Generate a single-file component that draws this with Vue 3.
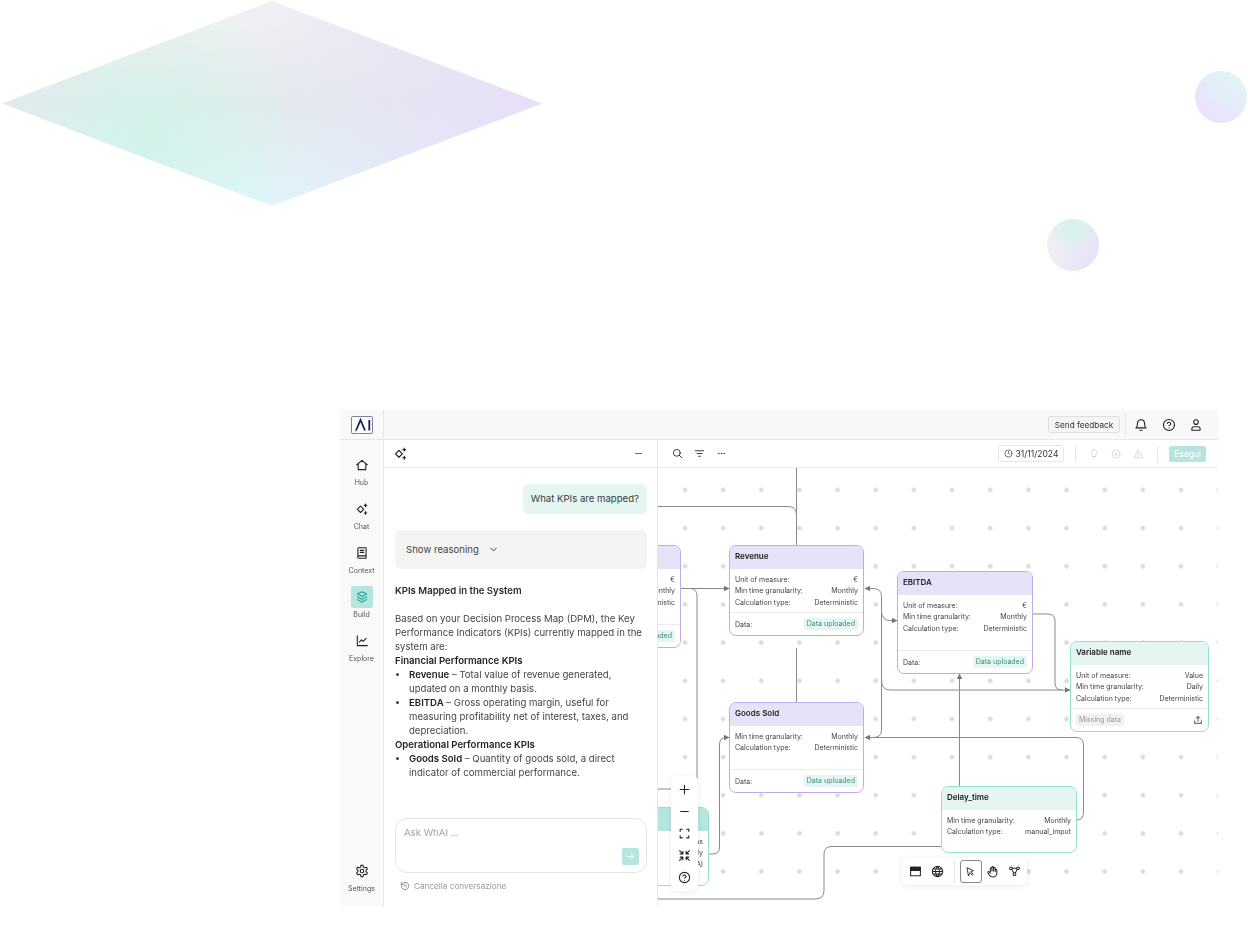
<template>
  <div class="page">
    <div class="diamond"></div>
    <div class="orb orb-a"></div>
    <div class="orb orb-b"></div>

    <div class="app">
      <aside class="rail">
        <div class="rail-head">
          <div class="logo">
            <svg viewBox="0 0 20 16">
              <path d="M4 13.500 8.500 3l4.500 10.500" />
              <path d="M17.300 3v10.500" />
              <path class="logo-dot" d="M2.800 14h1.600" />
            </svg>
          </div>
        </div>
        <nav class="rail-nav">
          <a v-for="item in navItems" :key="item.label" class="nav-item" :class="{ active: item.active }">
            <span class="nav-icon">
              <svg class="ico" viewBox="0 0 24 24"><path :d="icons[item.icon]" /></svg>
            </span>
            <span class="nav-label">{{ item.label }}</span>
          </a>
        </nav>
        <a class="nav-item settings">
          <span class="nav-icon">
            <svg class="ico" viewBox="0 0 24 24"><path :d="icons.settings" /></svg>
          </span>
          <span class="nav-label">Settings</span>
        </a>
      </aside>

      <div class="main">
        <header class="topbar">
          <button class="feedback">Send feedback</button>
          <span class="top-sep"></span>
          <svg class="ico top-ico" viewBox="0 0 24 24"><path :d="icons.bell" /></svg>
          <svg class="ico top-ico" viewBox="0 0 24 24"><path :d="icons.help" /></svg>
          <svg class="ico top-ico" viewBox="0 0 24 24"><path :d="icons.user" /></svg>
        </header>

        <div class="workspace">
          <section class="chat">
            <div class="chat-head">
              <svg class="ico" viewBox="0 0 24 24"><path :d="icons.sparkle" /></svg>
              <svg class="ico minus" viewBox="0 0 24 24"><path :d="icons.minus" /></svg>
            </div>
            <div class="chat-body">
              <div class="bubble">What KPIs are mapped?</div>
              <div class="reasoning">
                <span>Show reasoning</span>
                <svg class="ico chev" viewBox="0 0 24 24"><path d="m6 9 6 6 6-6" /></svg>
              </div>
              <div class="answer">
                <p class="answer-title">KPIs Mapped in the System</p>
                <p>Based on your Decision Process Map (DPM), the Key Performance Indicators (KPIs) currently mapped in the system are:</p>
                <p class="group">Financial Performance KPIs</p>
                <ul>
                  <li><b>Revenue</b> – Total value of revenue generated, updated on a monthly basis.</li>
                  <li><b>EBITDA</b> – Gross operating margin, useful for measuring profitability net of interest, taxes, and depreciation.</li>
                </ul>
                <p class="group">Operational Performance KPIs</p>
                <ul>
                  <li><b>Goods Sold</b> – Quantity of goods sold, a direct indicator of commercial performance.</li>
                </ul>
              </div>
              <div class="composer">
                <span class="placeholder">Ask WhAI ...</span>
                <button class="send">
                  <svg class="ico" viewBox="0 0 24 24"><path d="M5 12h14M13 6l6 6-6 6" /></svg>
                </button>
              </div>
              <div class="clear">
                <svg class="ico" viewBox="0 0 24 24"><path :d="icons.history" /></svg>
                <span>Cancella conversazione</span>
              </div>
            </div>
          </section>

          <section class="board">
            <div class="board-head">
              <svg class="ico" viewBox="0 0 24 24"><path :d="icons.search" /></svg>
              <svg class="ico" viewBox="0 0 24 24"><path :d="icons.filter" /></svg>
              <svg class="ico" viewBox="0 0 24 24"><path :d="icons.more" /></svg>
              <div class="date">
                <svg class="ico" viewBox="0 0 24 24"><path :d="icons.clock" /></svg>
                <span>31/11/2024</span>
              </div>
              <span class="head-sep"></span>
              <svg class="ico faint" viewBox="0 0 24 24"><path :d="icons.bulb" /></svg>
              <svg class="ico faint" viewBox="0 0 24 24"><path :d="icons.xcircle" /></svg>
              <svg class="ico faint" viewBox="0 0 24 24"><path :d="icons.warning" /></svg>
              <span class="head-sep second"></span>
              <button class="run">Esegui</button>
            </div>

            <div class="canvas">
              <svg class="edges" viewBox="658 468 560 438">
                <defs>
                  <marker id="tip" markerUnits="userSpaceOnUse" markerWidth="6" markerHeight="6" refX="5" refY="3" orient="auto">
                    <path d="M0 0.2 5.400 3 0 5.800z" />
                  </marker>
                </defs>
                <path v-for="(d, i) in edges" :key="i" :d="d" />
                <path v-for="(d, i) in arrows" :key="'a' + i" :d="d" marker-end="url(#tip)" />
              </svg>

              <article
                v-for="node in nodes"
                :key="node.title"
                class="node"
                :class="node.tone"
                :style="{ left: node.x + 'px', top: node.y + 'px', width: node.w + 'px', height: node.h + 'px' }"
              >
                <div class="node-head">{{ node.title }}</div>
                <div class="node-rows">
                  <div v-for="row in node.rows" :key="row[0]" class="node-row">
                    <span>{{ row[0] }}</span><span>{{ row[1] }}</span>
                  </div>
                </div>
                <div v-if="node.chip" class="node-foot">
                  <template v-if="node.missing">
                    <span class="chip grey">{{ node.chip }}</span>
                    <svg class="ico upload" viewBox="0 0 24 24"><path :d="icons.upload" /></svg>
                  </template>
                  <template v-else>
                    <span>Data:</span>
                    <span class="chip">{{ node.chip }}</span>
                  </template>
                </div>
              </article>

              <div class="zoom-tools">
                <svg v-for="name in zoomTools" :key="name" class="ico" viewBox="0 0 24 24"><path :d="icons[name]" /></svg>
              </div>

              <div class="mode-tools">
                <svg class="ico" viewBox="0 0 24 24"><path class="solid-top" d="M3 4h18v6H3z" /><path d="M3 4h18v16H3z" /></svg>
                <svg class="ico" viewBox="0 0 24 24"><path :d="icons.globe" /></svg>
                <span class="mode-sep"></span>
                <span class="mode-active">
                  <svg class="ico" viewBox="0 0 24 24"><path :d="icons.pointer" /></svg>
                </span>
                <svg class="ico" viewBox="0 0 24 24"><path :d="icons.hand" /></svg>
                <svg class="ico" viewBox="0 0 24 24"><path :d="icons.graph" /></svg>
              </div>
            </div>
          </section>
        </div>
      </div>
    </div>
  </div>
</template>

<script setup>
const icons = {
  home: 'M3 11.500 12 4l9 7.500M5.500 10v10h13V10',
  sparkle: 'M9.500 7l5.500 5.500-5.500 5.500L4 12.500zM18 3.500v4.500M15.800 5.800h4.400M18 16.500v4.500M15.800 18.800h4.400',
  book: 'M5 19V4.500A1.500 1.500 0 0 1 6.500 3H19v14H6.500a2 2 0 0 0 0 4H19v-4M9 7.500h6M9 11h6',
  layers: 'M12 3l8 4-8 4-8-4zM4 12l8 4 8-4M4 16.500l8 4 8-4',
  chart: 'M4 3v17h17M7.500 14l3.500-4 3 2.500 5-5',
  settings: 'M12.220 2h-.44a2 2 0 0 0-2 2v.18a2 2 0 0 1-1 1.730l-.43.25a2 2 0 0 1-2 0l-.15-.08a2 2 0 0 0-2.730.73l-.22.38a2 2 0 0 0 .73 2.730l.15.1a2 2 0 0 1 1 1.720v.51a2 2 0 0 1-1 1.740l-.15.09a2 2 0 0 0-.73 2.730l.22.38a2 2 0 0 0 2.730.73l.15-.08a2 2 0 0 1 2 0l.43.25a2 2 0 0 1 1 1.730V20a2 2 0 0 0 2 2h.44a2 2 0 0 0 2-2v-.18a2 2 0 0 1 1-1.730l.43-.25a2 2 0 0 1 2 0l.15.08a2 2 0 0 0 2.730-.73l.22-.39a2 2 0 0 0-.73-2.730l-.15-.08a2 2 0 0 1-1-1.740v-.5a2 2 0 0 1 1-1.740l.15-.09a2 2 0 0 0 .73-2.730l-.22-.38a2 2 0 0 0-2.730-.73l-.15.08a2 2 0 0 1-2 0l-.43-.25a2 2 0 0 1-1-1.730V4a2 2 0 0 0-2-2zM15 12a3 3 0 1 1-6 0 3 3 0 0 1 6 0z',
  bell: 'M6 9a6 6 0 0 1 12 0c0 6 2.500 8 2.500 8h-17S6 15 6 9M10.300 20.500a2 2 0 0 0 3.400 0',
  help: 'M21.500 12a9.500 9.500 0 1 1-19 0 9.500 9.500 0 0 1 19 0zM9.100 9.200a3 3 0 0 1 5.800 1c0 2-2.900 2.800-2.900 2.800M12 17h.01',
  user: 'M16 7a4 4 0 1 1-8 0 4 4 0 0 1 8 0zM5 21v-2.500A3.500 3.500 0 0 1 8.500 15h7a3.500 3.500 0 0 1 3.500 3.500V21z',
  minus: 'M5 12h14',
  plus: 'M12 4v16M4 12h16',
  history: 'M3 4v5h5M3.500 9a9 9 0 1 1-.5 3M12 7v5l3.500 2',
  search: 'M18 10.500a7.500 7.500 0 1 1-15 0 7.500 7.500 0 0 1 15 0zM16 16l5 5',
  filter: 'M3 6h18M6.500 12h11M10 18h4',
  more: 'M5 12h2M11 12h2M17 12h2',
  clock: 'M21.500 12a9.500 9.500 0 1 1-19 0 9.500 9.500 0 0 1 19 0zM12 6.500V12l3.500 2',
  bulb: 'M9 18h6M10 22h4M12 2a7 7 0 0 0-4 12.700V18h8v-3.300A7 7 0 0 0 12 2z',
  xcircle: 'M21.500 12a9.500 9.500 0 1 1-19 0 9.500 9.500 0 0 1 19 0zM15 9l-6 6M9 9l6 6',
  warning: 'M12 3 2 21h20zM12 10v5M12 18h.01',
  frame: 'M4 8V4h4M16 4h4v4M20 16v4h-4M8 20H4v-4',
  collapse: 'M3 3l6 6M9 4v5H4M21 3l-6 6M15 4v5h5M3 21l6-6M9 20v-5H4M21 21l-6-6M15 20v-5h5',
  globe: 'M21.500 12a9.500 9.500 0 1 1-19 0 9.500 9.500 0 0 1 19 0zM2.500 12h19M3.500 7.500h17M3.500 16.500h17M12 2.500c-5 5-5 14 0 19M12 2.500c5 5 5 14 0 19',
  pointer: 'M5 4l13.500 6-5.500 2.500 5 5.500-2 2-5-5.500L8 21z',
  hand: 'M8 12V6.500a1.500 1.500 0 0 1 3 0V11M11 10.500v-6a1.500 1.500 0 0 1 3 0v6.500M14 11V6a1.500 1.500 0 0 1 3 0v6M17 9.500a1.500 1.500 0 0 1 3 0V15a7 7 0 0 1-7 7h-1a7 7 0 0 1-6-3.500L3.500 14a1.500 1.500 0 0 1 2.500-1.500L8 15',
  graph: 'M8 6a2.500 2.500 0 1 1-5 0 2.500 2.500 0 0 1 5 0zM21 6a2.500 2.500 0 1 1-5 0 2.500 2.500 0 0 1 5 0zM14.500 17a2.500 2.500 0 1 1-5 0 2.500 2.500 0 0 1 5 0zM8 6h8M7 8l3.500 7M17 8l-3.500 7',
  upload: 'M12 15V4M7.500 8 12 3.500 16.500 8M4 14v6h16v-6',
}

const navItems = [
  { label: 'Hub', icon: 'home' },
  { label: 'Chat', icon: 'sparkle' },
  { label: 'Context', icon: 'book' },
  { label: 'Build', icon: 'layers', active: true },
  { label: 'Explore', icon: 'chart' },
]

const zoomTools = ['plus', 'minus', 'frame', 'collapse', 'help']

// node coords are relative to the canvas, which starts at 658,468 on the page
const nodes = [
  {
    title: 'Net Sales', tone: 'violet', x: -112, y: 77, w: 135, h: 103, chip: 'Data uploaded',
    rows: [['Unit of measure:', '€'], ['Min time granularity:', 'Monthly'], ['Calculation type:', 'Deterministic']],
  },
  {
    title: 'Revenue', tone: 'violet', x: 71, y: 77, w: 135, h: 91, chip: 'Data uploaded',
    rows: [['Unit of measure:', '€'], ['Min time granularity:', 'Monthly'], ['Calculation type:', 'Deterministic']],
  },
  {
    title: 'EBITDA', tone: 'violet', x: 239, y: 103, w: 136, h: 103, chip: 'Data uploaded',
    rows: [['Unit of measure:', '€'], ['Min time granularity:', 'Monthly'], ['Calculation type:', 'Deterministic']],
  },
  {
    title: 'Variable name', tone: 'mint', x: 412, y: 173, w: 139, h: 91, chip: 'Missing data', missing: true,
    rows: [['Unit of measure:', 'Value'], ['Min time granularity:', 'Daily'], ['Calculation type:', 'Deterministic']],
  },
  {
    title: 'Goods Sold', tone: 'violet', x: 71, y: 234, w: 135, h: 91, chip: 'Data uploaded',
    rows: [['Min time granularity:', 'Monthly'], ['Calculation type:', 'Deterministic']],
  },
  {
    title: 'Delay_time', tone: 'mint', x: 283, y: 318, w: 136, h: 67,
    rows: [['Min time granularity:', 'Monthly'], ['Calculation type:', 'manual_imput']],
  },
  {
    title: 'Delay_ideas', tone: 'teal', x: -84, y: 339, w: 135, h: 79,
    rows: [['Unit of measure:', 'Ideas'], ['Min time granularity:', 'Monthly'], ['Calculation type:', 'WhAI']],
  },
]

const edges = [
  'M796.500 468V545',
  'M658 506.500H788Q796.500 506.500 796.500 515',
  'M690 588.500Q697 588.500 697 596V781Q697 789 689 789H658',
  'M796.500 648V702',
  'M881.500 612V730Q881.500 737.500 873 737.500',
  'M1033 614H1048Q1055 614 1055 621V683Q1055 690 1062 690',
  'M1077 820H1077Q1083.500 820 1083.500 812V745Q1083.500 737.500 1076 737.500H866',
  'M941 846.500H832Q824 846.500 824 854V891Q824 899 815 899H658',
]

const arrows = [
  'M681 588.500H729',
  'M881.500 612V596Q881.500 588.500 873 588.500H865',
  'M881.500 612Q882 620.500 890 620.500H897',
  'M881.500 680Q881.500 690 890 690H1070',
  'M959.500 786V674',
  'M709 854H713Q719.500 854 719.500 847V745Q719.500 737.500 726 737.500H729',
  'M880 737.500H865',
]
</script>

<style>
html,
body {
  background: #fff;
}
</style>

<style scoped>
.page {
  position: relative;
  height: 936px;
  overflow: hidden;
  background: #fff;
  font-family: Inter, 'Liberation Sans', sans-serif;
  color: #3d3d3d;
}

.diamond {
  position: absolute;
  left: 2px;
  top: 1px;
  width: 540px;
  height: 205px;
  clip-path: polygon(0 50%, 50% 0, 100% 50%, 50% 100%);
  background:
    radial-gradient(circle 150px at 27% 68%, rgba(207, 243, 233, 0.8), rgba(207, 243, 233, 0)),
    linear-gradient(90deg, rgba(232, 222, 248, 0) 42%, #e8dff8 100%),
    linear-gradient(180deg, #f2f2f4 0%, #e2ebec 50%, #dff8fb 100%);
}

.orb {
  position: absolute;
  width: 52px;
  height: 52px;
  border-radius: 50%;
}

.orb-a {
  left: 1195px;
  top: 71px;
  background: linear-gradient(35deg, #e9e3fb 18%, #e0f4f7 82%);
}

.orb-b {
  left: 1047px;
  top: 219px;
  background:
    radial-gradient(circle 30px at 50% 12%, #d2f3eb, rgba(210, 243, 235, 0)),
    linear-gradient(110deg, #f2f2f3 5%, #e7e2f8 90%);
}

.app {
  position: absolute;
  left: 340px;
  top: 410px;
  display: flex;
  width: 878px;
  height: 496px;
  overflow: hidden;
  border-radius: 3px 3px 0 0;
  background: #fff;
  filter: blur(0.3px);
}

.ico {
  display: block;
  width: 14px;
  height: 14px;
  flex: none;
  fill: none;
  stroke: #222;
  stroke-width: 1.9;
  stroke-linecap: round;
  stroke-linejoin: round;
}

/* rail */
.rail {
  display: flex;
  flex-direction: column;
  width: 44px;
  flex: none;
  box-sizing: border-box;
  background: #f9f9f9;
  border-right: 1px solid #e6e6e6;
}

.rail-head {
  display: flex;
  align-items: center;
  justify-content: center;
  height: 30px;
  box-sizing: border-box;
  border-bottom: 1px solid #e6e6e6;
}

.logo {
  width: 22px;
  height: 18px;
  box-sizing: border-box;
  border: 1px solid #7c7f9a;
  border-radius: 2px;
  background: #fff;
}

.logo svg {
  display: block;
  width: 20px;
  height: 16px;
  fill: none;
  stroke: #16204a;
  stroke-width: 1.8;
}

.logo .logo-dot {
  stroke: #2bb39f;
  stroke-width: 1.2;
}

.rail-nav {
  display: flex;
  flex-direction: column;
  gap: 9.500px;
  padding-top: 13.500px;
}

.nav-item {
  display: flex;
  flex-direction: column;
  align-items: center;
  gap: 2.500px;
}

.nav-icon {
  display: flex;
  align-items: center;
  justify-content: center;
  width: 22px;
  height: 22px;
  border-radius: 2px;
}

.nav-icon .ico {
  width: 14px;
  height: 14px;
}

.nav-item.active .nav-icon {
  background: #b5e5de;
}

.nav-item.active .ico {
  stroke: #24a08f;
}

.nav-label {
  font-size: 7px;
  line-height: 10px;
  color: #555;
}

.settings {
  margin-top: auto;
  padding-bottom: 12px;
}

/* top bar */
.main {
  display: flex;
  flex-direction: column;
  flex: 1;
  min-width: 0;
}

.topbar {
  display: flex;
  align-items: center;
  height: 30px;
  flex: none;
  box-sizing: border-box;
  padding-right: 15px;
  background: #f8f8f8;
  border-bottom: 1px solid #e6e6e6;
}

.feedback {
  width: 72px;
  height: 17px;
  margin-left: auto;
  padding: 0;
  border: 1px solid #dedede;
  border-radius: 3px;
  background: #f5f5f5;
  font: 8.200px Inter, sans-serif;
  color: #333;
}

.top-sep {
  width: 1px;
  height: 22px;
  margin: 0 8px 0 5px;
  background: #e4e4e4;
}

.top-ico {
  width: 14px;
  height: 14px;
  margin-right: 13.500px;
}

.top-ico:last-child {
  margin-right: 0;
}

.workspace {
  display: flex;
  flex: 1;
  min-height: 0;
}

/* chat */
.chat {
  display: flex;
  flex-direction: column;
  width: 274px;
  flex: none;
  box-sizing: border-box;
  border-right: 1px solid #e6e6e6;
  background: #fff;
}

.chat-head {
  display: flex;
  align-items: center;
  justify-content: space-between;
  height: 28px;
  flex: none;
  box-sizing: border-box;
  padding: 0 13px 0 9px;
  border-bottom: 1px solid #ececec;
}

.chat-head .ico {
  width: 15px;
  height: 15px;
}

.chat-head .minus {
  width: 11px;
  height: 11px;
  stroke: #555;
}

.chat-body {
  display: flex;
  flex-direction: column;
  flex: 1;
  min-height: 0;
  padding: 16px 10px 13px 11px;
}

.bubble {
  align-self: flex-end;
  padding: 0 8px;
  height: 30px;
  line-height: 30px;
  border-radius: 6px;
  background: #e5f5f2;
  font-size: 9.600px;
  color: #3a3a3a;
}

.reasoning {
  display: flex;
  align-items: center;
  gap: 9px;
  height: 38.500px;
  margin-top: 16px;
  padding-left: 11px;
  border-radius: 6px;
  background: #f4f4f4;
  font-size: 9.600px;
  color: #444;
}

.chev {
  width: 11px;
  height: 11px;
}

.answer {
  margin-top: 15.500px;
  font-size: 9.600px;
  line-height: 14px;
  color: #444;
}

.answer p {
  margin: 0;
}

.answer .answer-title {
  margin-bottom: 14px;
  font-weight: 600;
  color: #2b2b2b;
}

.answer .group {
  font-weight: 600;
  color: #222;
}

.answer ul {
  margin: 0;
  padding-left: 14px;
}

.answer b {
  font-weight: 600;
  color: #222;
}

.composer {
  position: relative;
  height: 55px;
  flex: none;
  margin-top: auto;
  box-sizing: border-box;
  padding: 7px 8px;
  border: 1px solid #e3e3e3;
  border-radius: 12px;
}

.placeholder {
  display: block;
  font-size: 9.600px;
  line-height: 14px;
  color: #a3a3a3;
}

.send {
  position: absolute;
  right: 7px;
  bottom: 7px;
  display: flex;
  align-items: center;
  justify-content: center;
  width: 17px;
  height: 17px;
  padding: 0;
  border: 0;
  border-radius: 2px;
  background: #b5e5de;
}

.send .ico {
  width: 11px;
  height: 11px;
  stroke: #fff;
}

.clear {
  display: flex;
  align-items: center;
  gap: 4px;
  height: 14px;
  margin-top: 6px;
  padding-left: 5px;
  font-size: 8.200px;
  color: #9a9a9a;
}

.clear .ico {
  width: 10px;
  height: 10px;
  stroke: #777;
}

/* board */
.board {
  display: flex;
  flex-direction: column;
  flex: 1;
  min-width: 0;
}

.board-head {
  display: flex;
  align-items: center;
  height: 28px;
  flex: none;
  box-sizing: border-box;
  padding: 0 12px 0 13.500px;
  border-bottom: 1px solid #ececec;
}

.board-head > .ico {
  width: 11px;
  height: 11px;
  margin-right: 11px;
}

.board-head > .ico.faint {
  width: 10px;
  height: 10px;
  margin-right: 12px;
  stroke: #cfcfcf;
}

.date {
  display: flex;
  align-items: center;
  justify-content: center;
  gap: 3px;
  width: 66px;
  height: 17px;
  margin-left: auto;
  box-sizing: border-box;
  border: 1px solid #e6e6e6;
  border-radius: 3px;
  font-size: 8.500px;
  color: #333;
}

.date .ico {
  width: 9px;
  height: 9px;
  stroke: #444;
}

.head-sep {
  width: 1px;
  height: 16px;
  margin: 0 13px 0 11px;
  background: #e6e6e6;
}

.head-sep.second {
  margin: 0 11px 0 2px;
}

.run {
  width: 37px;
  height: 16px;
  padding: 0;
  border: 0;
  border-radius: 2px;
  background: #b5e5de;
  font: 8.500px Inter, sans-serif;
  color: #fff;
}

.canvas {
  position: relative;
  flex: 1;
  min-height: 0;
  overflow: hidden;
  background-image: radial-gradient(circle, #dcdcdc 2px, transparent 2.500px);
  background-size: 38.170px 38.170px;
  background-position: 7.900px 2.900px;
}

.edges {
  position: absolute;
  inset: 0;
  width: 560px;
  height: 438px;
  fill: none;
  stroke: #8a8a8a;
  stroke-width: 1;
}

.edges marker path {
  fill: #777;
  stroke: none;
}

.node {
  position: absolute;
  display: flex;
  flex-direction: column;
  box-sizing: border-box;
  overflow: hidden;
  border: 1px solid;
  border-radius: 7px;
  background: #fff;
}

.node.violet {
  border-color: #baaef0;
}

.node.violet .node-head {
  background: #e6e2f8;
}

.node.mint,
.node.teal {
  border-color: #92e0d5;
}

.node.mint .node-head {
  background: #e5f5f2;
}

.node.teal .node-head {
  background: #b5e5de;
}

.node-head {
  height: 23px;
  flex: none;
  padding: 0 5px;
  line-height: 20.500px;
  font-size: 8px;
  font-weight: 600;
  color: #222;
}

.node-rows {
  padding: 5px 5px 0;
}

.node-row {
  display: flex;
  justify-content: space-between;
  height: 11.400px;
  line-height: 11.400px;
  font-size: 7px;
  color: #444;
}

.node-foot {
  display: flex;
  align-items: center;
  justify-content: space-between;
  height: 23.500px;
  margin-top: auto;
  flex: none;
  box-sizing: border-box;
  padding: 1px 5px 0;
  border-top: 1px solid #ebebeb;
  font-size: 7px;
  color: #444;
}

.chip {
  padding: 0 3px;
  height: 12px;
  line-height: 12px;
  border-radius: 2px;
  background: #e5f5f2;
  font-size: 7px;
  color: #3c8d7f;
}

.chip.grey {
  background: #f1f1f1;
  color: #9a9a9a;
}

.upload {
  width: 10px;
  height: 10px;
}

.zoom-tools {
  position: absolute;
  left: 13px;
  top: 308px;
  display: flex;
  flex-direction: column;
  align-items: center;
  gap: 9px;
  width: 27px;
  height: 115px;
  box-sizing: border-box;
  padding-top: 7px;
  border-radius: 5px;
  background: #fff;
  box-shadow: 0 1px 6px rgba(0, 0, 0, 0.08);
}

.zoom-tools .ico {
  width: 13px;
  height: 13px;
  stroke-width: 2;
}

.mode-tools {
  position: absolute;
  left: 244px;
  top: 390px;
  display: flex;
  align-items: center;
  width: 125px;
  height: 27px;
  box-sizing: border-box;
  padding-left: 6.500px;
  border-radius: 5px;
  background: #fff;
  box-shadow: 0 1px 6px rgba(0, 0, 0, 0.09);
}

.mode-tools > .ico {
  width: 13px;
  height: 13px;
  margin-right: 9px;
}

.mode-tools > .ico:last-child {
  margin-right: 0;
}

.mode-tools .solid-top {
  fill: #222;
}

.mode-sep {
  width: 1px;
  height: 22px;
  flex: none;
  margin: 0 5px 0 1px;
  background: #e6e6e6;
}

.mode-active {
  display: flex;
  align-items: center;
  justify-content: center;
  width: 22px;
  height: 23px;
  flex: none;
  margin-right: 4.500px;
  box-sizing: border-box;
  border: 1px solid #8a8a8a;
  border-radius: 3px;
}

.mode-active .ico {
  width: 11px;
  height: 11px;
}
</style>
